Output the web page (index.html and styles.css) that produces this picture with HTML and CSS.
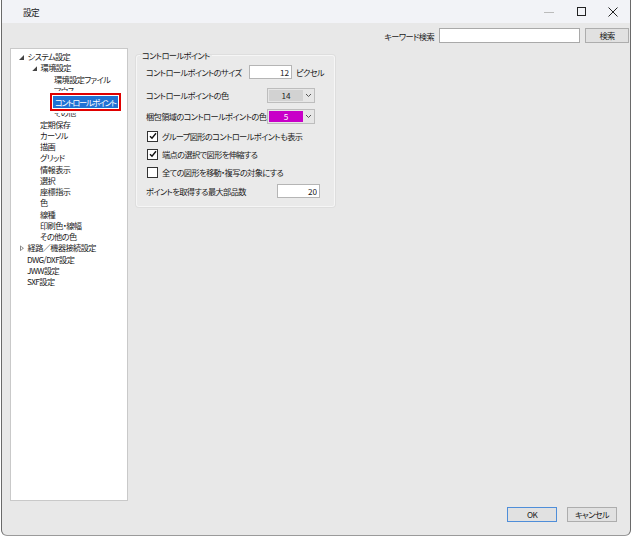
FILE: index.html
```html
<!DOCTYPE html>
<html lang="ja">
<head>
    <meta charset="UTF-8">
    <title>設定</title>
    <link rel="stylesheet" href="styles.css">
</head>
<body>
<div class="window">
    <div class="titlebar">
        <span class="title">設定</span>
        <div class="controls">
            <svg width="12" height="10" viewBox="0 0 12 10"><path d="M1 5.5h10" stroke="#bbb" stroke-width="1"/></svg>
            <svg width="12" height="10" viewBox="0 0 12 10"><rect x="2.5" y="0.5" width="8" height="8" fill="none" stroke="#222" stroke-width="1"/></svg>
            <svg width="12" height="10" viewBox="0 0 12 10"><path d="M1.5 0.5l9 9M10.5 0.5l-9 9" stroke="#222" stroke-width="1"/></svg>
        </div>
    </div>

    <div class="searchbar">
        <label>キーワード検索</label>
        <input type="text" class="search-input">
        <button class="btn search-btn">検索</button>
    </div>

    <div class="content">
        <ul class="tree">
            <li class="lv0"><span class="arrow open"></span>システム設定</li>
            <li class="lv1"><span class="arrow open"></span>環境設定</li>
            <li class="lv2">環境設定ファイル</li>
            <li class="lv2">マウス</li>
            <li class="lv2"><span class="selected">コントロールポイント</span></li>
            <li class="lv2">その他</li>
            <li class="lv1">定期保存</li>
            <li class="lv1">カーソル</li>
            <li class="lv1">描画</li>
            <li class="lv1">グリッド</li>
            <li class="lv1">情報表示</li>
            <li class="lv1">選択</li>
            <li class="lv1">座標指示</li>
            <li class="lv1">色</li>
            <li class="lv1">線種</li>
            <li class="lv1">印刷色・線幅</li>
            <li class="lv1">その他の色</li>
            <li class="lv0"><span class="arrow closed"></span>経路／機器接続設定</li>
            <li class="lv0">DWG/DXF設定</li>
            <li class="lv0">JWW設定</li>
            <li class="lv0">SXF設定</li>
        </ul>

        <fieldset class="group">
            <legend>コントロールポイント</legend>
            <div class="row r-size">
                <span class="lbl w-size">コントロールポイントのサイズ</span>
                <input type="text" class="num" value="12">
                <span class="unit">ピクセル</span>
            </div>
            <div class="row r-color">
                <span class="lbl w-color">コントロールポイントの色</span>
                <div class="colorsel">
                    <span class="swatch gray">14</span>
                    <span class="chev"><svg width="7" height="5" viewBox="0 0 7 5"><path d="M1 1l2.5 2.5L6 1" fill="none" stroke="#555" stroke-width="1"/></svg></span>
                </div>
            </div>
            <div class="row r-pack">
                <span class="lbl w-color">梱包領域のコントロールポイントの色</span>
                <div class="colorsel">
                    <span class="swatch magenta">5</span>
                    <span class="chev"><svg width="7" height="5" viewBox="0 0 7 5"><path d="M1 1l2.5 2.5L6 1" fill="none" stroke="#555" stroke-width="1"/></svg></span>
                </div>
            </div>
            <div class="row check r-first-check">
                <span class="box"><svg width="8" height="8" viewBox="0 0 8 8"><path d="M1 4.2l2 2.1L7 1.2" fill="none" stroke="#111" stroke-width="1.4"/></svg></span>
                <span>グループ図形のコントロールポイントも表示</span>
            </div>
            <div class="row check">
                <span class="box"><svg width="8" height="8" viewBox="0 0 8 8"><path d="M1 4.2l2 2.1L7 1.2" fill="none" stroke="#111" stroke-width="1.4"/></svg></span>
                <span>端点の選択で図形を伸縮する</span>
            </div>
            <div class="row check">
                <span class="box"></span>
                <span>全ての図形を移動・複写の対象にする</span>
            </div>
            <div class="row r-max">
                <span class="lbl w-max">ポイントを取得する最大部品数</span>
                <input type="text" class="num" value="20">
            </div>
        </fieldset>
    </div>

    <div class="footer">
        <button class="btn ok">OK</button>
        <button class="btn">キャンセル</button>
    </div>
</div>
</body>
</html>
```

FILE: styles.css
```css
html, body {
    margin: 0;
    padding: 0;
    background: #fff;
}
body {
    font-family: "Noto Sans CJK JP", "Noto Sans", sans-serif;
    font-feature-settings: "palt";
    font-size: 8.2px;
    letter-spacing: -0.6px;
    color: #1a1a1a;
}
.window {
    width: 628px;
    height: 535px;
    margin-left: 1px;
    border-left: 1px solid #6a6a6a;
    border-right: 1px solid #6a6a6a;
    border-bottom: 1px solid #9a9a9a;
    border-radius: 0 0 6px 6px;
    background: #e8e8e8;
    overflow: hidden;
}
.titlebar {
    height: 23px;
    background: #f2f3f7;
    display: flex;
    align-items: center;
    justify-content: space-between;
}
.title {
    margin-left: 21px;
    font-size: 8.6px;
}
.controls {
    display: flex;
    gap: 20px;
    margin-right: 11px;
}
.controls svg {
    display: block;
}
.searchbar {
    display: flex;
    align-items: center;
    justify-content: flex-end;
    height: 15px;
    margin-top: 5px;
    padding-right: 1px;
}
.searchbar label {
    margin-right: 5px;
}
.search-input {
    width: 139px;
    height: 13px;
    padding: 0;
    border: 1px solid #a9a9a9;
    background: #fff;
    margin-right: 5px;
}
.btn {
    font-family: inherit;
    font-feature-settings: "palt";
    font-size: 8.2px;
    letter-spacing: -0.6px;
    color: #1a1a1a;
    background: #e1e1e1;
    border: 1px solid #adadad;
    padding: 0;
    height: 15px;
    line-height: 13px;
}
.search-btn {
    width: 44px;
}
.content {
    display: flex;
    align-items: flex-start;
    margin-top: 5px;
    height: 452px;
}
.tree {
    list-style: none;
    margin: 0 0 0 8px;
    padding: 2px 0 0 0;
    width: 116px;
    height: 449px;
    background: #fff;
    border: 1px solid #c9c9c9;
}
.tree li {
    height: 11.25px;
    line-height: 11.25px;
    white-space: nowrap;
}
.tree .lv0 { padding-left: 16px; }
.tree .lv1 { padding-left: 29px; }
.tree .lv2 { padding-left: 43px; }
.arrow {
    display: inline-block;
    width: 5px;
    height: 5px;
    margin-left: -8px;
    margin-right: 3.6px;
    vertical-align: 0;
}
.arrow.open {
    background: #444;
    clip-path: polygon(100% 0, 100% 100%, 0 100%);
}
.arrow.closed {
    width: 4px;
    height: 6px;
    margin-left: -7px;
    background: #888;
    clip-path: polygon(0 0, 100% 50%, 0 100%, 0 0, 1px 1.4px, 1px 4.6px, 2.6px 3px, 1px 1.4px);
}
.selected {
    position: relative;
    z-index: 1;
    display: inline-block;
    height: 12px;
    line-height: 12px;
    margin-left: -1px;
    padding: 0 2px;
    letter-spacing: -1.3px;
    background: #1f72d4;
    color: #fff;
    box-shadow: 0 0 0 1px #fff, 0 0 0 3px #e00000, 0 0 0 5px #fff;
}
.group {
    margin: 2px 0 0 8px;
    padding: 0 10px 6px 9px;
    width: 173px;
    border: 1px solid #f6f6f6;
    box-shadow: 0 0 0 1px #dedede;
    border-radius: 3px;
    background: #eaeaea;
}
.group legend {
    padding: 0 2px 0 2px;
    margin-left: -6px;
    line-height: 10px;
}
.row {
    display: flex;
    align-items: center;
    height: 18px;
    white-space: nowrap;
}
.r-size { margin-top: 3px; }
.r-color { margin-top: 5px; }
.r-pack { margin-top: 3px; }
.r-first-check { margin-top: 2px; }
.r-max { margin-top: 1px; }
.lbl { flex: none; }
.w-size { width: 103px; }
.w-color { width: 121px; }
.w-max { width: 131px; }
.num {
    width: 39px;
    height: 12px;
    padding: 0 2px 0 0;
    border: 1px solid #b5b5b5;
    background: #fff;
    font-family: inherit;
    font-size: 8.2px;
    text-align: right;
    color: #1a1a1a;
}
.unit {
    margin-left: 4px;
}
.colorsel {
    display: flex;
    align-items: center;
    width: 46px;
    height: 13px;
    border: 1px solid #bdbdbd;
    background: #e6e6e6;
}
.swatch {
    width: 34px;
    height: 11px;
    margin-left: 1px;
    text-align: center;
    line-height: 11px;
    letter-spacing: 0;
}
.swatch.gray {
    background: #d2d2d2;
    color: #222;
}
.swatch.magenta {
    background: #c800c8;
    color: #fff;
}
.chev {
    flex: 1;
    display: flex;
    justify-content: center;
}
.chev svg { display: block; }
.row.check {
    margin-left: 1px;
}
.box {
    width: 9px;
    height: 9px;
    border: 1px solid #333;
    background: #fff;
    margin-right: 4px;
    display: flex;
    align-items: center;
    justify-content: center;
}
.box svg { display: block; }
.footer {
    display: flex;
    justify-content: flex-end;
    gap: 10px;
    margin-top: 7px;
    padding-right: 13px;
}
.footer .btn {
    width: 50px;
}
.footer .ok {
    border-color: #4f8ed9;
}
```
